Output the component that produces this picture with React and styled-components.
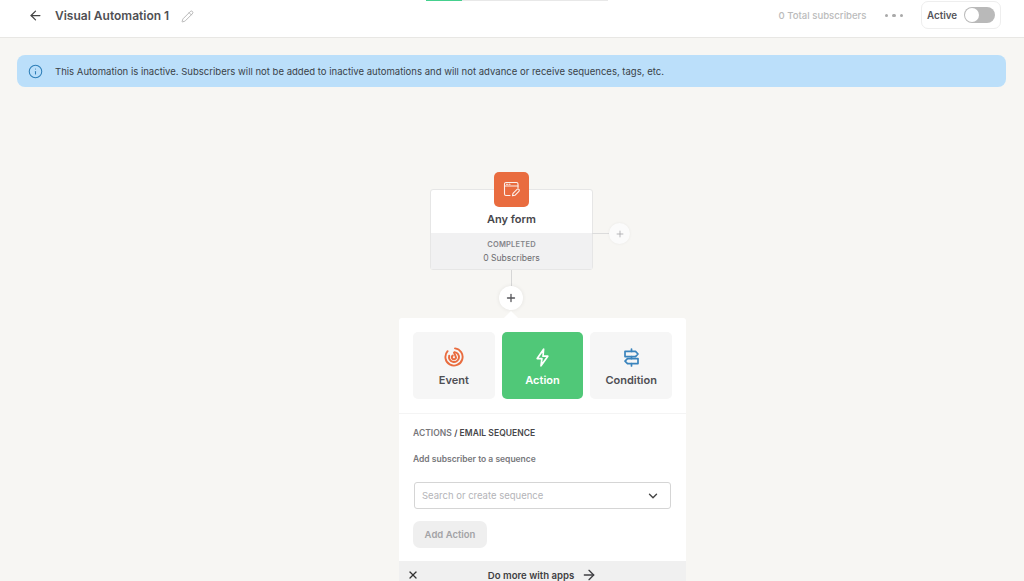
import React from 'react'
import styled, { createGlobalStyle } from 'styled-components'
import { ArrowLeft, ArrowRight, ChevronDown, Info, Pencil, Plus, X } from 'lucide-react'

const GlobalStyle = createGlobalStyle`
    html, body {
        margin: 0;
        height: 100%;
        overflow: hidden;
        background: #f7f6f3;
    }
    * {
        box-sizing: border-box;
    }
    body {
        font-family: Inter, "Liberation Sans", sans-serif;
        color: #4b4b4f;
    }
`

const TargetIcon = () => (
    <svg width="20" height="20" viewBox="0 0 20 20" fill="none" stroke="#e96c3f" strokeWidth="1.9" strokeLinecap="round">
        <path d="M11 1.4A8.6 8.6 0 1 1 3.6 4.2" />
        <path d="M10.6 5.1A5 5 0 1 1 5.2 8.6" />
        <path d="M8.8 8.6A2 2 0 1 0 11.6 9.2L10 5.5" />
    </svg>
)

const FormIcon = () => (
    <svg width="17" height="17" viewBox="0 0 17 17" fill="none" stroke="#fff" strokeWidth="1.1" strokeLinecap="round" strokeLinejoin="round" opacity="0.9">
        <path d="M7 14.5H3a1.5 1.5 0 0 1-1.5-1.5V3A1.5 1.5 0 0 1 3 1.5h10.5A1.5 1.5 0 0 1 15 3v4" />
        <path d="M1.5 5h13.5" />
        <path d="M3.5 3.3h1M6 3.3h1" />
        <path d="M9.5 14.8l.5-2.4 4-4a1.3 1.3 0 0 1 1.9 1.9l-4 4z" />
    </svg>
)

const BoltIcon = () => (
    <svg width="13" height="19" viewBox="0 0 13 19" fill="none" stroke="#fff" strokeWidth="1.7" strokeLinejoin="round">
        <path d="M7.6 1.2L1.2 10.6h4.7L5 17.8l6.8-9.6H7z" />
    </svg>
)

const SignpostIcon = () => (
    <svg width="17" height="19" viewBox="0 0 17 19" fill="none" stroke="#3a84bd" strokeWidth="1.7" strokeLinejoin="round" strokeLinecap="round">
        <path d="M8.5 1v2.4M8.5 8.6v2M8.5 15.6V18" />
        <path d="M2 3.4h10.5L15 6l-2.5 2.6H2z" />
        <path d="M15 10.6H4.5L2 13.1l2.5 2.5H15z" />
    </svg>
)

const App = () => (
    <Page>
        <GlobalStyle />
        <Header>
            <BackButton><ArrowLeft size={15} strokeWidth={2} /></BackButton>
            <Title>Visual Automation 1</Title>
            <EditIcon><Pencil size={13} strokeWidth={1.5} /></EditIcon>
            <Progress><ProgressFill $value={20} /></Progress>
            <HeaderRight>
                <Total>0 Total subscribers</Total>
                <Dots><Dot /><Dot /><Dot /></Dots>
                <ActiveBox>
                    <ActiveLabel>Active</ActiveLabel>
                    <Toggle><Knob /></Toggle>
                </ActiveBox>
            </HeaderRight>
        </Header>
        <Canvas>
            <Banner>
                <Info size={15} strokeWidth={1.7} color="#2f7fb8" />
                <BannerText>
                    This Automation is inactive. Subscribers will not be added to inactive automations and will not advance or receive sequences, tags, etc.
                </BannerText>
            </Banner>
            <Flow>
                <Node>
                    <NodeBadge><FormIcon /></NodeBadge>
                    <NodeTop>Any form</NodeTop>
                    <NodeBottom>
                        <NodeStatus>COMPLETED</NodeStatus>
                        <NodeCount>0 Subscribers</NodeCount>
                    </NodeBottom>
                    <SideBranch>
                        <SideLine />
                        <SidePlus><Plus size={10} strokeWidth={2} /></SidePlus>
                    </SideBranch>
                </Node>
                <Connector />
                <AddStep><Plus size={12} strokeWidth={2.6} /></AddStep>
                <Panel>
                    <TypeRow>
                        <TypeCard>
                            <TargetIcon />
                            Event
                        </TypeCard>
                        <TypeCard $active>
                            <BoltIcon />
                            Action
                        </TypeCard>
                        <TypeCard>
                            <SignpostIcon />
                            Condition
                        </TypeCard>
                    </TypeRow>
                    <PanelBody>
                        <Crumb>ACTIONS <CrumbStrong>/ EMAIL SEQUENCE</CrumbStrong></Crumb>
                        <FieldLabel>Add subscriber to a sequence</FieldLabel>
                        <SelectBox>
                            Search or create sequence
                            <ChevronDown size={14} strokeWidth={2.4} color="#444" />
                        </SelectBox>
                        <AddAction>Add Action</AddAction>
                    </PanelBody>
                    <AppsBar>
                        <CloseButton><X size={12} strokeWidth={2.6} /></CloseButton>
                        Do more with apps
                        <ArrowRight size={16} strokeWidth={2} />
                    </AppsBar>
                </Panel>
            </Flow>
        </Canvas>
    </Page>
)

const Page = styled.div`
    width: 1024px;
    height: 581px;
    display: flex;
    flex-direction: column;
    overflow: hidden;
`

const Header = styled.header`
    position: relative;
    height: 38px;
    flex: none;
    display: flex;
    align-items: center;
    padding: 0 23px 8px 28px;
    background: #fff;
    border-bottom: 1px solid #e8e7e4;
`

const BackButton = styled.span`
    display: flex;
    color: #444;
    margin: 1px 12px 0 0;
`

const Title = styled.div`
    margin-top: 1px;
    font-size: 12px;
    font-weight: 600;
    color: #505054;
`

const EditIcon = styled.span`
    display: flex;
    margin-left: 12px;
    margin-top: 3px;
    color: #aaa;
`

const Progress = styled.div`
    position: absolute;
    left: 426px;
    top: 0;
    width: 182px;
    height: 1px;
    background: #e8e8e8;
`

const ProgressFill = styled.div`
    width: ${props => props.$value}%;
    height: 100%;
    background: #45d08e;
`

const HeaderRight = styled.div`
    margin-left: auto;
    display: flex;
    align-items: center;
`

const Total = styled.span`
    margin: 1px 18px 0 0;
    font-size: 9.6px;
    font-weight: 500;
    color: #bbbbbb;
`

const Dots = styled.span`
    display: flex;
    gap: 4px;
    margin: 2px 18px 0 0;
`

const Dot = styled.i`
    width: 3.5px;
    height: 3.5px;
    border-radius: 50%;
    background: #a9a9a9;
`

const ActiveBox = styled.div`
    width: 80px;
    height: 28px;
    display: flex;
    align-items: center;
    justify-content: space-between;
    padding: 0 5px 0 5px;
    background: #fff;
    border: 1px solid #eeeeee;
    border-radius: 7px;
`

const ActiveLabel = styled.span`
    margin-top: 1px;
    font-size: 9.8px;
    font-weight: 600;
    color: #55555a;
`

const Toggle = styled.span`
    width: 31px;
    height: 16px;
    padding: 1px;
    border-radius: 8px;
    background: #b9b9b9;
`

const Knob = styled.span`
    display: block;
    width: 14px;
    height: 14px;
    border-radius: 50%;
    background: #fff;
`

const Canvas = styled.main`
    flex: 1;
    padding: 17px 17px 0;
    overflow: hidden;
`

const Banner = styled.div`
    width: 989px;
    height: 32px;
    display: flex;
    align-items: center;
    gap: 12px;
    padding-left: 11px;
    border-radius: 8px;
    background: #bbdffa;
`

const BannerText = styled.span`
    font-size: 9.54px;
    color: #3a4248;
`

const Flow = styled.div`
    display: flex;
    flex-direction: column;
    align-items: flex-start;
    margin: 102px 0 0 382px;
`

const Node = styled.div`
    position: relative;
    margin-left: 31px;
    width: 163px;
    height: 81px;
    display: flex;
    flex-direction: column;
    background: #fff;
    border: 1px solid #e6e6e6;
    border-radius: 3px;
`

const NodeBadge = styled.div`
    position: absolute;
    left: 63px;
    top: -18px;
    width: 35px;
    height: 35px;
    display: flex;
    align-items: center;
    justify-content: center;
    border-radius: 5px;
    background: #e96c3f;
`

const NodeTop = styled.div`
    height: 43px;
    padding-top: 22px;
    text-align: center;
    font-size: 11px;
    font-weight: 600;
    color: #47474b;
`

const NodeBottom = styled.div`
    flex: 1;
    display: flex;
    flex-direction: column;
    align-items: center;
    gap: 4px;
    padding-top: 7px;
    background: #f1f1f2;
`

const NodeStatus = styled.div`
    font-size: 7.5px;
    font-weight: 600;
    letter-spacing: 0.2px;
    color: #85858a;
`

const NodeCount = styled.div`
    font-size: 8.6px;
    color: #6c6c70;
`

const SideBranch = styled.div`
    position: absolute;
    left: 100%;
    top: 33px;
    display: flex;
    align-items: center;
`

const SideLine = styled.div`
    width: 17px;
    height: 1px;
    background: #dcdcdc;
`

const SidePlus = styled.div`
    width: 21px;
    height: 21px;
    display: flex;
    align-items: center;
    justify-content: center;
    border-radius: 50%;
    color: #a8a8ac;
    background: #fbfbfb;
    box-shadow: 0 0 3px rgba(0, 0, 0, 0.06);
`

const Connector = styled.div`
    width: 1px;
    height: 16px;
    margin-left: 112px;
    background: #d6d6d6;
`

const AddStep = styled.div`
    width: 24px;
    height: 24px;
    margin-left: 100px;
    display: flex;
    align-items: center;
    justify-content: center;
    border-radius: 50%;
    color: #55555a;
    background: #fff;
    box-shadow: 0 0 4px rgba(0, 0, 0, 0.08);
`

const Panel = styled.section`
    position: relative;
    width: 287px;
    margin-top: 8px;
    background: #fff;
    border-radius: 3px 3px 0 0;

    &::before {
        content: '';
        position: absolute;
        left: 107px;
        top: -5px;
        width: 10px;
        height: 10px;
        background: #fff;
        transform: rotate(45deg);
    }
`

const TypeRow = styled.div`
    position: relative;
    display: flex;
    gap: 7px;
    padding: 14px 14px 14px;
    border-bottom: 1px solid #f4f4f4;
`

const TypeCard = styled.div`
    flex: 1;
    height: 67px;
    display: flex;
    flex-direction: column;
    align-items: center;
    justify-content: center;
    gap: 6px;
    padding-top: 3px;
    font-size: 11px;
    font-weight: 600;
    border-radius: 5px;
    color: ${props => props.$active ? '#fff' : '#4f4f54'};
    background: ${props => props.$active ? '#50c878' : '#f6f6f6'};
`

const PanelBody = styled.div`
    padding: 14px 14px 13px;
`

const Crumb = styled.div`
    font-size: 8.5px;
    font-weight: 600;
    letter-spacing: 0.05px;
    color: #77777b;
`

const CrumbStrong = styled.span`
    color: #47474b;
`

const FieldLabel = styled.div`
    margin-top: 16px;
    font-size: 8.5px;
    font-weight: 600;
    color: #77777b;
`

const SelectBox = styled.div`
    width: 257px;
    height: 27px;
    margin: 18px 0 0 1px;
    display: flex;
    align-items: center;
    justify-content: space-between;
    padding: 0 10px 0 7px;
    font-size: 9.5px;
    color: #b4b4b8;
    border: 1px solid #d5d5d5;
    border-radius: 3px;
`

const AddAction = styled.div`
    width: 74px;
    height: 27px;
    margin-top: 12px;
    display: flex;
    align-items: center;
    justify-content: center;
    font-size: 9.5px;
    font-weight: 600;
    color: #a3a3a6;
    border-radius: 7px;
    background: #efefef;
`

const AppsBar = styled.div`
    position: relative;
    height: 28px;
    display: flex;
    align-items: center;
    justify-content: center;
    gap: 7px;
    font-size: 9.6px;
    font-weight: 600;
    color: #3f3f43;
    background: #f0f0f0;
`

const CloseButton = styled.span`
    position: absolute;
    left: 8px;
    top: 8px;
    display: flex;
    color: #333;
`

export default App
